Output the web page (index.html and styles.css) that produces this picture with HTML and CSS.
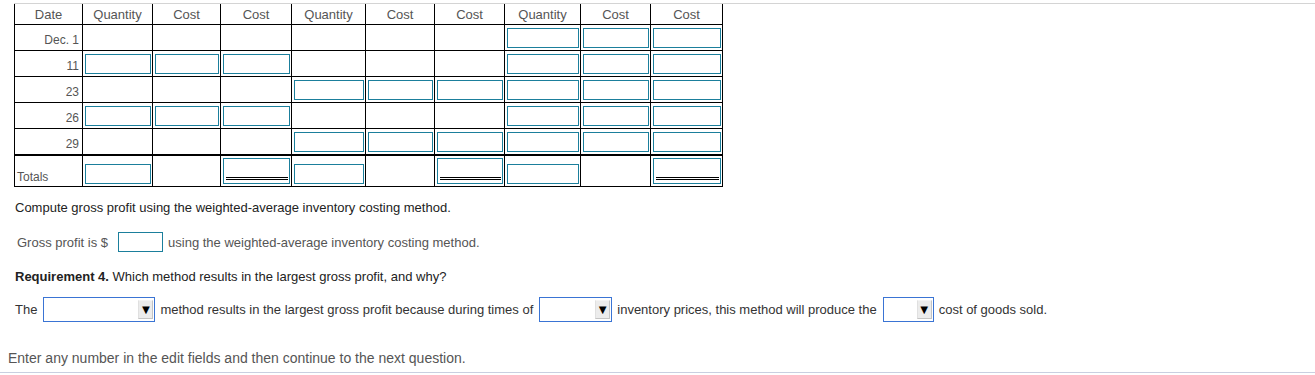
FILE: index.html
```html
<!DOCTYPE html>
<html lang="en">
<head>
<meta charset="utf-8">
<title>Inventory costing</title>
<link rel="stylesheet" href="styles.css">
</head>
<body>
<div class="page">
  <div class="sep"></div>
  <table class="inv">
    <thead>
      <tr>
        <th class="c1">Date</th><th class="c2">Quantity</th><th class="c3">Cost</th><th class="c4">Cost</th>
        <th class="c5">Quantity</th><th class="c6">Cost</th><th class="c7">Cost</th>
        <th class="c8">Quantity</th><th class="c9">Cost</th><th class="c10">Cost</th>
      </tr>
    </thead>
    <tbody>
      <tr>
        <td class="date">Dec. 1</td><td></td><td></td><td></td><td></td><td></td><td></td>
        <td class="f"><input class="in" type="text"></td><td class="f"><input class="in" type="text"></td><td class="f"><input class="in" type="text"></td>
      </tr>
      <tr>
        <td class="date">11</td>
        <td class="f"><input class="in" type="text"></td><td class="f"><input class="in" type="text"></td><td class="f"><input class="in" type="text"></td>
        <td></td><td></td><td></td>
        <td class="f"><input class="in" type="text"></td><td class="f"><input class="in" type="text"></td><td class="f"><input class="in" type="text"></td>
      </tr>
      <tr>
        <td class="date">23</td><td></td><td></td><td></td>
        <td class="f"><input class="in" type="text"></td><td class="f"><input class="in" type="text"></td><td class="f"><input class="in" type="text"></td>
        <td class="f"><input class="in" type="text"></td><td class="f"><input class="in" type="text"></td><td class="f"><input class="in" type="text"></td>
      </tr>
      <tr>
        <td class="date">26</td>
        <td class="f"><input class="in" type="text"></td><td class="f"><input class="in" type="text"></td><td class="f"><input class="in" type="text"></td>
        <td></td><td></td><td></td>
        <td class="f"><input class="in" type="text"></td><td class="f"><input class="in" type="text"></td><td class="f"><input class="in" type="text"></td>
      </tr>
      <tr class="last">
        <td class="date">29</td><td></td><td></td><td></td>
        <td class="f"><input class="in" type="text"></td><td class="f"><input class="in" type="text"></td><td class="f"><input class="in" type="text"></td>
        <td class="f"><input class="in" type="text"></td><td class="f"><input class="in" type="text"></td><td class="f"><input class="in" type="text"></td>
      </tr>
      <tr class="totals">
        <td class="tlabel">Totals</td>
        <td class="f"><input class="in" type="text"></td>
        <td></td>
        <td class="f"><div class="dbl"><input class="bare" type="text"><span class="rule"></span></div></td>
        <td class="f"><input class="in" type="text"></td>
        <td></td>
        <td class="f"><div class="dbl"><input class="bare" type="text"><span class="rule"></span></div></td>
        <td class="f"><input class="in" type="text"></td>
        <td></td>
        <td class="f"><div class="dbl"><input class="bare" type="text"><span class="rule"></span></div></td>
      </tr>
    </tbody>
  </table>

  <p class="q">Compute gross profit using the weighted-average inventory costing method.</p>

  <div class="gp">
    <span>Gross profit is $</span>
    <input class="in gp-in" type="text">
    <span>using the weighted-average inventory costing method.</span>
  </div>

  <p class="req"><b>Requirement 4.</b> Which method results in the largest gross profit, and why?</p>

  <div class="ans">
    <span>The</span>
    <span class="dd w1"><select><option></option></select><span class="dd-btn">&#9660;</span></span>
    <span>method results in the largest gross profit because during times of</span>
    <span class="dd w2"><select><option></option></select><span class="dd-btn">&#9660;</span></span>
    <span>inventory prices, this method will produce the</span>
    <span class="dd w3"><select><option></option></select><span class="dd-btn">&#9660;</span></span>
    <span>cost of goods sold.</span>
  </div>

  <div class="foot">Enter any number in the edit fields and then continue to the next question.</div>
</div>
</body>
</html>
```
FILE: styles.css
```css
html, body {
  margin: 0;
  padding: 0;
  background: #fff;
}

body {
  font-family: "Liberation Sans", Arial, sans-serif;
  font-size: 13px;
  color: #333;
}

.page {
  padding-top: 3px;
  height: 369px;
  border-bottom: 1px solid #c9cfe0;
}

.sep {
  margin-left: 14px;
  border-top: 1px solid #d4d4d4;
}

.inv {
  margin-left: 14px;
  border-collapse: separate;
  border-spacing: 0;
  table-layout: fixed;
  width: 709px;
  border-left: 1px solid #000;
  font-size: 12px;
}

.inv th,
.inv td {
  box-sizing: border-box;
  border-right: 1px solid #000;
  border-bottom: 1px solid #000;
  padding: 0;
}

.inv th {
  height: 21px;
  font-size: 13px;
  font-weight: normal;
  color: #555;
  text-align: center;
  vertical-align: middle;
  line-height: 15px;
}

.c1 { width: 68px; }
.c2 { width: 70px; }
.c3 { width: 68px; }
.c4 { width: 71px; }
.c5 { width: 74px; }
.c6 { width: 69px; }
.c7 { width: 70px; }
.c8 { width: 76px; }
.c9 { width: 70px; }
.c10 { width: 72px; }

.inv td {
  height: 26px;
  vertical-align: middle;
}

.inv tr.last td {
  height: 27px;
  border-bottom-width: 2px;
}

.inv tr.totals td {
  height: 31px;
  vertical-align: bottom;
  padding-bottom: 2px;
}

.inv td.f {
  padding: 1px 1px 0 2px;
}

.inv tr.totals td.f {
  padding: 0 1px 2px 2px;
}

.inv td.date {
  text-align: right;
  padding: 4px 3px 0 0;
  color: #555;
  line-height: 14px;
}

.inv td.tlabel {
  text-align: left;
  padding: 0 0 3px 2px;
  color: #555;
  line-height: 14px;
}

.in {
  display: block;
  box-sizing: border-box;
  width: 100%;
  height: 20px;
  margin: 0;
  padding: 0 2px;
  border: 1px solid #1b7f9c;
  background: #fff;
  font: inherit;
  outline: none;
}

.dbl {
  box-sizing: border-box;
  height: 26px;
  border: 1px solid #1b7f9c;
  display: flex;
  flex-direction: column;
  padding: 0 1px 3px 2px;
}

.bare {
  flex: 1;
  min-height: 0;
  min-width: 0;
  border: 0;
  padding: 0;
  margin: 0;
  outline: none;
  background: transparent;
  font: inherit;
}

.rule {
  display: block;
  height: 1px;
  border-top: 1px solid #000;
  border-bottom: 1px solid #000;
}

.q {
  margin: 13px 0 0 15px;
  line-height: 15px;
  color: #222;
}

.gp {
  display: flex;
  align-items: center;
  margin: 17px 0 0 17px;
  height: 20px;
  color: #555;
}

.gp-in {
  display: inline-block;
  width: 45px;
  margin: 0 5px 0 10px;
}

.req {
  margin: 17px 0 0 15px;
  line-height: 15px;
  color: #222;
}

.ans {
  display: flex;
  align-items: center;
  margin: 13px 0 0 15px;
  height: 25px;
  color: #333;
  white-space: nowrap;
}

.dd {
  display: inline-flex;
  box-sizing: border-box;
  height: 25px;
  margin: 0 5px 0 6px;
  border: 1px solid #3a74d4;
  background: #fff;
  padding: 2px 1px 2px 0;
}

.dd select {
  flex: 1;
  min-width: 0;
  appearance: none;
  -webkit-appearance: none;
  border: 0;
  margin: 0;
  padding: 0;
  background: transparent;
  font: inherit;
  outline: none;
}

.dd-btn {
  box-sizing: border-box;
  width: 15px;
  background: #ececec;
  border: 1px solid #c4c4c4;
  border-top-color: #f4f4f4;
  border-left-color: #e0e0e0;
  color: #000;
  font-size: 13px;
  line-height: 17px;
  text-align: center;
}

.w1 { width: 112px; }
.w2 { width: 73px; }
.w3 { width: 51px; }

.foot {
  margin: 28px 0 0 8px;
  font-size: 14px;
  line-height: 16px;
  color: #555;
}
```
